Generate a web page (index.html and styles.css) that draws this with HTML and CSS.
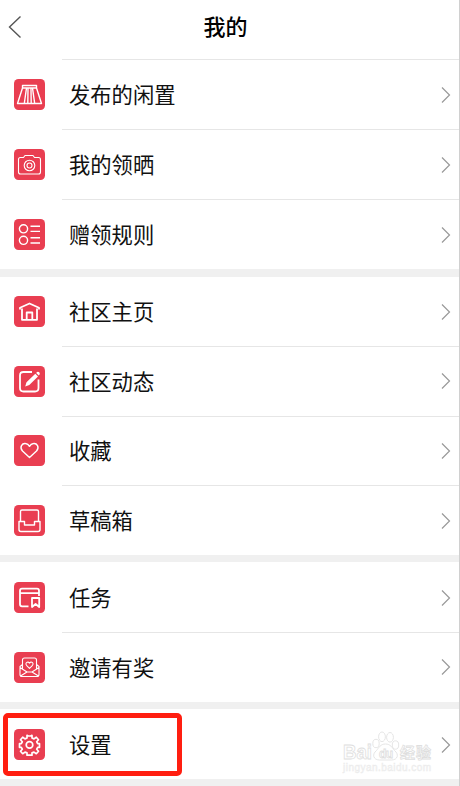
FILE: index.html
```html
<!DOCTYPE html>
<html lang="zh-CN">
<head>
    <meta charset="UTF-8">
    <meta name="viewport" content="width=device-width, initial-scale=1.0">
    <title>我的</title>
    <link rel="stylesheet" href="styles.css">
</head>
<body>
    <div class="page">
        <header class="header">
            <svg class="back" viewBox="0 0 14 24"><path d="M12.5 1.5L1.5 12l11 10.5"/></svg>
            <h1>我的</h1>
        </header>

        <div class="group first">
            <div class="row">
                <svg class="icon" viewBox="0 0 31 31"><path d="M8.5 6.500h14v2.500h-14zM8.500 9L3.500 24.500h24L22.500 9M12.500 9L10.300 24.500M15.500 9v0M18.500 9l2.200 15.500M14 9.500L13.800 24.500M17 9.500L17.200 24.500"/></svg>
                <div class="cell"><span>发布的闲置</span><svg class="arrow" viewBox="0 0 10 18"><path d="M1 1.500L8.500 9L1 16.500"/></svg></div>
            </div>
            <div class="row">
                <svg class="icon thin" viewBox="0 0 31 31"><path d="M6.500 8.500h3l1.500-2h8l1.500 2h4q2 0 2 2V23q0 2-2 2h-18q-2 0-2-2V10.500q0-2 2-2z"/><circle cx="15.500" cy="16.500" r="5.300"/><circle cx="15.500" cy="16.500" r="2.500"/></svg>
                <div class="cell"><span>我的领晒</span><svg class="arrow" viewBox="0 0 10 18"><path d="M1 1.500L8.500 9L1 16.500"/></svg></div>
            </div>
            <div class="row">
                <svg class="icon" viewBox="0 0 31 31"><circle cx="9.500" cy="9.800" r="4.100"/><circle cx="9.500" cy="21.300" r="4.100"/><path d="M16.500 7.200h9.500M16.500 12.400h9.500M16.500 18.700h9.500M16.500 24h9.500"/></svg>
                <div class="cell"><span>赠领规则</span><svg class="arrow" viewBox="0 0 10 18"><path d="M1 1.500L8.500 9L1 16.500"/></svg></div>
            </div>
        </div>

        <div class="group">
            <div class="row">
                <svg class="icon bold" viewBox="0 0 31 31"><path d="M6 13.500V11.800l9.500-4.300 9.500 4.300v1.700M8 12.500v11.300h15V12.500M12.700 23.500v-7h5.600v7"/></svg>
                <div class="cell"><span>社区主页</span><svg class="arrow" viewBox="0 0 10 18"><path d="M1 1.500L8.500 9L1 16.500"/></svg></div>
            </div>
            <div class="row">
                <svg class="icon bold" viewBox="0 0 31 31"><path d="M18 6H9.500Q6 6 6 9.500V22q0 3.500 3.500 3.500H21q3.500 0 3.500-3.500v-8.500"/><path class="solid" d="M11.200 20.500l1.300-4.200 8.800-8.500 2.700 2.700-8.700 8.600zM22.200 6.900l.8-.8q1.200-.8 2.200.2t.4 2.300l-.8.900z"/></svg>
                <div class="cell"><span>社区动态</span><svg class="arrow" viewBox="0 0 10 18"><path d="M1 1.500L8.500 9L1 16.500"/></svg></div>
            </div>
            <div class="row">
                <svg class="icon" viewBox="0 0 31 31"><path d="M15.500 22.500l-7-6.500c-3.500-4-.2-8 3-7.500 2 .2 3.200 1.300 4 2.800.8-1.500 2-2.600 4-2.800 3.200-.5 6.500 3.500 3 7.500z"/></svg>
                <div class="cell"><span>收藏</span><svg class="arrow" viewBox="0 0 10 18"><path d="M1 1.500L8.500 9L1 16.500"/></svg></div>
            </div>
            <div class="row">
                <svg class="icon" viewBox="0 0 31 31"><path d="M6.500 16V6.500q0-1.500 1.500-1.500h15q1.500 0 1.500 1.500V16M5 16.500h5.500v3.500h10v-3.500H26v8q0 2-2 2H7q-2 0-2-2z"/></svg>
                <div class="cell"><span>草稿箱</span><svg class="arrow" viewBox="0 0 10 18"><path d="M1 1.500L8.500 9L1 16.500"/></svg></div>
            </div>
        </div>

        <div class="group">
            <div class="row">
                <svg class="icon bold" viewBox="0 0 31 31"><path d="M14.500 24.300H8q-2 0-2-2V8.700q0-2 2-2h15q2 0 2 2V14M6 11.200h19"/><path d="M18 16h7.200v9L21.600 22 18 25z"/></svg>
                <div class="cell"><span>任务</span><svg class="arrow" viewBox="0 0 10 18"><path d="M1 1.500L8.500 9L1 16.500"/></svg></div>
            </div>
            <div class="row">
                <svg class="icon thin" viewBox="0 0 31 31"><path d="M8.500 17V8q0-2 2-2h10q2 0 2 2v9M8.500 12.500L6 14.500v8q0 2 2 2h15q2 0 2-2v-8l-2.500-2M6 15.500l7 4.500h5l7-4.500M6.500 24l6.500-4M24.500 24L18 20"/><path d="M15.500 16.300l-3-3c-1.800-2.500 1.500-4.500 3-2.200 1.500-2.300 4.800-.3 3 2.200z"/></svg>
                <div class="cell"><span>邀请有奖</span><svg class="arrow" viewBox="0 0 10 18"><path d="M1 1.500L8.500 9L1 16.500"/></svg></div>
            </div>
        </div>

        <div class="group last">
            <div class="row">
                <svg class="icon" viewBox="0 0 31 31"><path stroke-width="1.700" d="M13 9V6.300l1.300.7h2.400l1.300-.7V9l2 .9 2.300-1.700 2.200 2.500-1.800 2.100 1 1.900h1.800v3.600h-1.800l-1 1.900 1.800 2-2.200 2.500-2.300-1.600-2 .8v2.300h-5v-2.300l-2-.8-2.300 1.600-2.200-2.500 1.800-2-1-1.900H5.500v-3.600h1.800l1-1.900-1.800-2.100 2.200-2.500L11 9.900z"/><circle cx="15.500" cy="15.900" r="3.300" stroke-width="1.700"/></svg>
                <div class="cell"><span>设置</span><svg class="arrow" viewBox="0 0 10 18"><path d="M1 1.500L8.500 9L1 16.500"/></svg></div>
            </div>
            <div class="highlight"></div>
            <svg class="watermark" viewBox="0 0 100 50">
                <text class="brand" x="4" y="27.500" textLength="29" lengthAdjust="spacingAndGlyphs">Bai</text>
                <path class="paw" d="M46.500 13c-5 0-6.500 3.500-9 6.500-5 4-3 9.500 3 9.500h12c6 0 8-5.500 3-9.500-2.500-3-4-6.500-9-6.500z"/>
                <ellipse class="paw" cx="37" cy="12.500" rx="3.200" ry="4.200"/>
                <ellipse class="paw" cx="43" cy="5.800" rx="3.400" ry="4.800"/>
                <ellipse class="paw" cx="51" cy="6.300" rx="3.400" ry="4.800"/>
                <ellipse class="paw" cx="56.500" cy="14" rx="3.200" ry="4.200"/>
                <text class="du" x="40" y="26.500" textLength="14">du</text>
                <text class="cn" x="61" y="27" textLength="31">经验</text>
                <text class="url" x="4" y="39.500" textLength="88">jingyan.baidu.com</text>
            </svg>
        </div>
    </div>
</body>
</html>
```
FILE: styles.css
```css
body {
    margin: 0;
    background-color: #f0f0f0;
    color: #111;
    font-family: "Noto Sans CJK SC", sans-serif;
}
.page {
    box-sizing: border-box;
    height: 786px;
    border-right: 1px solid #d0d0d0;
    overflow: hidden;
}
.header {
    display: grid;
    grid-template-columns: 60px 1fr 68px;
    align-items: center;
    height: 59px;
    background-color: #fff;
}
.header h1 {
    margin: 0 0 9px;
    font-size: 22px;
    line-height: 32px;
    font-weight: 500;
    text-align: center;
    color: #000;
}
.back {
    width: 14px;
    height: 24px;
    margin: 0 0 6px 8px;
    fill: none;
    stroke: #555;
    stroke-width: 1.4;
}
.group {
    position: relative;
    margin-bottom: 7.5px;
    background-color: #fff;
}
.row {
    display: flex;
    align-items: center;
    height: 69.6px;
}
.first .row,
.last .row {
    height: 70px;
}
.icon {
    flex: none;
    width: 31px;
    height: 31px;
    margin: 1px 17px 0 13.5px;
    border-radius: 4.5px;
    background-color: #e93e51;
    fill: none;
    stroke: #fff;
    stroke-width: 1.4;
    stroke-linejoin: round;
}
.icon.thin {
    stroke-width: 1.1;
}
.icon.bold {
    stroke-width: 1.8;
}
.icon .solid {
    fill: #fff;
    stroke: none;
}
.cell {
    box-sizing: border-box;
    flex: 1;
    display: flex;
    align-items: center;
    justify-content: space-between;
    height: 100%;
    padding: 0 8px 0 7.5px;
    border-top: 1px solid #e6e6e6;
    font-size: 21.3px;
    line-height: 32px;
}
.cell span {
    margin-bottom: 1px;
}
.group + .group .row:first-child .cell {
    border-top-color: transparent;
}
.arrow {
    width: 10px;
    height: 18px;
    fill: none;
    stroke: #999;
    stroke-width: 1.2;
}
/* red frame round the settings row */
.highlight {
    position: absolute;
    top: 3.5px;
    left: 3px;
    box-sizing: border-box;
    width: 179px;
    height: 63px;
    border: 5px solid #ff1e10;
    border-radius: 5px;
}
.watermark {
    position: absolute;
    top: 22px;
    left: 339px;
    width: 100px;
    height: 50px;
    fill: #fff;
    stroke: #dedede;
    stroke-width: 0.8;
    font-family: "Liberation Sans", "Noto Sans CJK SC", sans-serif;
    font-weight: bold;
}
.brand {
    font-size: 20px;
}
.du {
    font-size: 12px;
}
.cn {
    font-size: 15px;
}
.url {
    font-size: 10px;
    font-weight: normal;
    fill: #f4f4f4;
    stroke: #ebebeb;
    stroke-width: 0.4;
}
```
